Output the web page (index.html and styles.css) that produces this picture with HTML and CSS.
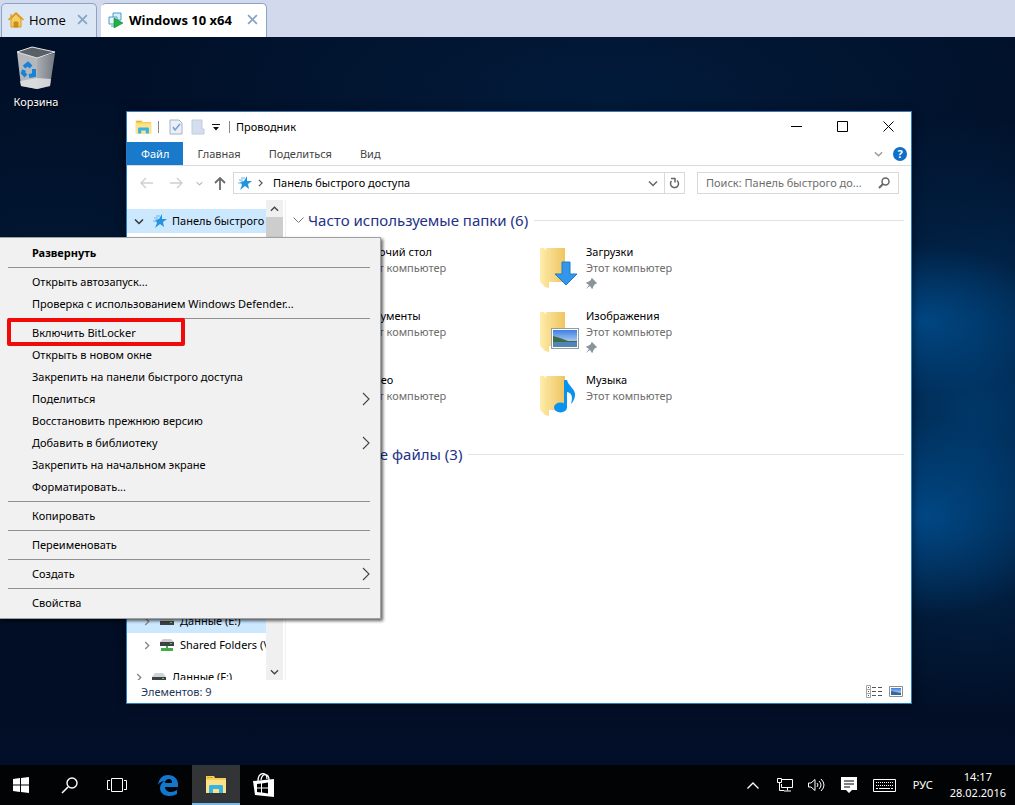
FILE: index.html
```html
<!DOCTYPE html>
<html lang="ru">
<head>
    <meta charset="UTF-8">
    <meta name="viewport" content="width=device-width, initial-scale=1.0">
    <title>Windows 10 x64</title>
    <link rel="stylesheet" href="styles.css">
</head>
<body>
    <svg class="defs" aria-hidden="true">
        <defs>
            <linearGradient id="folderBack" x1="0" x2="1"><stop offset="0" stop-color="#fbe29b"/><stop offset="1" stop-color="#eec560"/></linearGradient>
            <linearGradient id="folderFront" x1="0" x2="1"><stop offset="0" stop-color="#ffeeb0"/><stop offset="1" stop-color="#f7dc8a"/></linearGradient>
            <linearGradient id="sky" x1="0" x2="0" y1="0" y2="1"><stop offset="0" stop-color="#3f7fe0"/><stop offset="1" stop-color="#dcecf8"/></linearGradient>
            <linearGradient id="binSide" x1="0" x2="1"><stop offset="0" stop-color="#a9adb3"/><stop offset="1" stop-color="#747a82"/></linearGradient>
        </defs>
        <symbol id="folder" viewBox="0 0 26 42">
            <path d="M6 1h19v34H6z" fill="url(#folderBack)"/>
            <path d="M0 1h4l5 6v34l-4-1-5-5z" fill="url(#folderFront)"/>
        </symbol>
        <symbol id="explorer" viewBox="0 0 22 19">
            <path d="M1 1h8l1 2h11v15H1z" fill="#f5cf57"/>
            <path d="M2 2h6v1H2z" fill="#d9a52c"/>
            <path d="M1 5h20v13H1z" fill="#fde28a"/>
            <path d="M4 18v-7l1-1h12l1 1v7h-4v-4H8v4z" fill="#35b5e5"/>
        </symbol>
        <symbol id="star" viewBox="0 0 14 14">
            <path d="M9 0l0 5 5 0-4 3 1 5-4-3-5 4 2-5-2-3 4-1z" fill="#2494e0"/>
            <path d="M3 2h4M1 4h4M0 7h4" stroke="#62b7ef" fill="none"/>
        </symbol>
        <symbol id="pin" viewBox="0 0 11 11">
            <path d="M6 0l5 5-1 1-1 0-2 3v1l-1 1-2-3-4 3 3-4-3-2 1-1h1l3-2V1z" fill="#8a949b"/>
        </symbol>
        <symbol id="down" viewBox="0 0 10 6"><path d="M1 1l4 4 4-4" fill="none" stroke="currentColor" stroke-width="1.5"/></symbol>
        <symbol id="right" viewBox="0 0 6 10"><path d="M1 1l4 4-4 4" fill="none" stroke="currentColor" stroke-width="1.5"/></symbol>
        <symbol id="more" viewBox="0 0 8 14"><path d="M1 1l6 6-6 6" fill="none" stroke="#444" stroke-width="1.1"/></symbol>
        <symbol id="cross" viewBox="0 0 10 10"><path d="M1 1l8 8M9 1l-8 8" fill="none" stroke="currentColor" stroke-width="1.6"/></symbol>
        <symbol id="drive" viewBox="0 0 14 9">
            <path d="M3 0h8l3 4H0z" fill="#d0d3d6"/>
            <path d="M0 4h14v4H0z" fill="#3d4246"/>
            <path d="M10 5h2v1h-2z" fill="#51d651"/>
        </symbol>
        <symbol id="photo" viewBox="0 0 28 21">
            <path d="M0 0h28v21H0z" fill="#969ba0"/>
            <path d="M1 1h26v19H1z" fill="#fff"/>
            <path d="M2 2h24v17H2z" fill="url(#sky)"/>
            <path d="M2 8l7 2 8 3 9 0v2H2z" fill="#3c6b45"/>
            <path d="M2 14h24v5H2z" fill="#5384b5"/>
        </symbol>
    </svg>

    <nav class="vm-tabs">
        <div class="vm-tab">
            <svg width="16" height="16" viewBox="0 0 16 16"><path d="M3 7v8h10V7L8 2z" fill="#f6cf63" stroke="#d49a1c"/><path d="M0.500 8L8 1l7.500 7" fill="none" stroke="#dba126" stroke-width="1.600"/><path d="M3 2v3M6 10h4v5H6z" fill="#c98d1d" stroke="#c98d1d"/></svg>
            <a href="#">Home</a>
            <button class="vm-close" aria-label="Close Home"><svg width="11" height="11"><use href="#cross"/></svg></button>
        </div>
        <div class="vm-tab vm-tab-active">
            <svg width="16" height="16" viewBox="0 0 16 16"><path d="M5 1h8v7H5z" fill="#d9edf8" stroke="#4b9cc4"/><path d="M1 5h8v7H1zM3 14h5" fill="#e9f5fb" stroke="#4b9cc4"/><path d="M6 6l9 5-9 5z" fill="#1fb141" stroke="#0d8c2c" stroke-width=".6"/></svg>
            <a href="#">Windows 10 x64</a>
            <button class="vm-close" aria-label="Close Windows 10 x64"><svg width="11" height="11"><use href="#cross"/></svg></button>
        </div>
    </nav>

    <main class="desktop">
        <a class="shortcut" href="#">
            <svg width="40" height="44" viewBox="0 0 40 44">
                <path d="M1 6l20 6v31L5 40z" fill="#b4b8bd"/>
                <path d="M21 12l18-5-5 33-13 3z" fill="url(#binSide)"/>
                <path d="M1 6L16 1l23 5-18 6z" fill="#5b6067" stroke="#e7e9eb"/>
                <path d="M4 35l17-3 14 1-1 7-13 3-16-3z" fill="#e2e3e4" opacity=".8"/>
                <g fill="none" stroke="#1682d8" stroke-width="4"><path d="M8 21l4-3 3 3"/><path d="M18 23l0 6-5 1"/><path d="M10 30l-3-3 1-3"/></g>
            </svg>
            <span>Корзина</span>
        </a>

        <section class="window">
            <header class="titlebar">
                <svg width="17" height="16"><use href="#explorer"/></svg>
                <i class="rule"></i>
                <button class="quick" aria-label="Свойства"><svg width="14" height="16" viewBox="0 0 14 16"><path d="M1 1h9l3 3v11H1z" fill="#e9f0fa" stroke="#a5b2c6"/><path d="M4 8l2 3 5-6" fill="none" stroke="#7d9cc7" stroke-width="1.500"/></svg></button>
                <button class="quick" aria-label="Новая папка"><svg width="14" height="16" viewBox="0 0 14 16"><path d="M1 1h10v9h2v5H1z" fill="#d5deee" stroke="#c0cbdc"/></svg></button>
                <button class="quick quick-menu" aria-label="Настройка"><svg width="8" height="7" viewBox="0 0 8 7"><path d="M0 0h8v1H0zM1 3h6L4 6.500z" fill="#111"/></svg></button>
                <i class="rule"></i>
                <span class="window-title">Проводник</span>
                <div class="window-buttons">
                    <button aria-label="Свернуть"><svg width="11" height="11" viewBox="0 0 11 11"><path d="M0 5h11v1H0z"/></svg></button>
                    <button aria-label="Развернуть"><svg width="11" height="11" viewBox="0 0 11 11"><path d="M.5.5h10v10H.5z" fill="none" stroke="#000"/></svg></button>
                    <button aria-label="Закрыть"><svg width="11" height="11" viewBox="0 0 11 11"><path d="M.5.5l10 10M10.500.5l-10 10" stroke="#000"/></svg></button>
                </div>
            </header>

            <nav class="ribbon">
                <a class="ribbon-file" href="#">Файл</a>
                <a href="#">Главная</a>
                <a href="#">Поделиться</a>
                <a href="#">Вид</a>
                <div class="ribbon-end">
                    <button aria-label="Развернуть ленту"><svg width="9" height="6"><use href="#down"/></svg></button>
                    <button class="help" aria-label="Справка">?</button>
                </div>
            </nav>

            <div class="address-row">
                <div class="nav-buttons">
                    <button aria-label="Назад"><svg width="13" height="12" viewBox="0 0 13 12"><path d="M13 6H1M6 1L1 6l5 5" fill="none" stroke="#cfcfcf" stroke-width="1.400"/></svg></button>
                    <button aria-label="Вперед"><svg width="13" height="12" viewBox="0 0 13 12"><path d="M0 6h12M7 1l5 5-5 5" fill="none" stroke="#cfcfcf" stroke-width="1.400"/></svg></button>
                    <button class="nav-recent" aria-label="Последние расположения"><svg width="7" height="5"><use href="#down"/></svg></button>
                    <button class="nav-up" aria-label="Вверх"><svg width="12" height="13" viewBox="0 0 12 13"><path d="M6 13V1M1 6l5-5 5 5" fill="none" stroke="#6b6b6b" stroke-width="1.800"/></svg></button>
                </div>
                <div class="address">
                    <svg width="14" height="14"><use href="#star"/></svg>
                    <svg class="crumb" width="5" height="8"><use href="#right"/></svg>
                    <span>Панель быстрого доступа</span>
                    <button class="address-drop" aria-label="Предыдущие расположения"><svg width="10" height="7"><use href="#down"/></svg></button>
                    <button class="refresh" aria-label="Обновить"><svg width="11" height="12" viewBox="0 0 11 12"><path d="M2.500 4A4 4 0 1 0 8 3.500M2 1.500h4.500M6 1v4.500" fill="none" stroke="#666" stroke-width="1.500"/></svg></button>
                </div>
                <label class="search">
                    <input type="text" placeholder="Поиск: Панель быстрого до..." aria-label="Поиск">
                    <svg width="12" height="12" viewBox="0 0 12 12"><circle cx="7.500" cy="4.500" r="3.500" fill="none" stroke="#666" stroke-width="1.500"/><path d="M5 7l-4 4" stroke="#666" stroke-width="2"/></svg>
                </label>
            </div>

            <div class="panes">
                <aside class="tree">
                    <a class="tree-row tree-selected" href="#"><svg class="open" width="10" height="7"><use href="#down"/></svg><svg width="14" height="14"><use href="#star"/></svg><span>Панель быстрого</span></a>
                    <div class="tree-bottom">
                        <a class="tree-row tree-child tree-selected" href="#"><svg width="6" height="9"><use href="#right"/></svg><svg width="14" height="9"><use href="#drive"/></svg><span>Данные (E:)</span></a>
                        <a class="tree-row tree-child" href="#"><svg width="6" height="9"><use href="#right"/></svg><svg width="14" height="13" viewBox="0 0 14 13"><path d="M3 0h8l3 3H0z" fill="#c9cdd0"/><path d="M0 3h14v4H0z" fill="#3d4246"/><path d="M10 4h2v1h-2z" fill="#51d651"/><path d="M6 7h2v2h5v3H1V9h5z" fill="#3fae48"/></svg><span>Shared Folders (\</span></a>
                        <a class="tree-row tree-last" href="#"><svg width="6" height="9"><use href="#right"/></svg><svg width="14" height="9"><use href="#drive"/></svg><span>Данные (F:)</span></a>
                    </div>
                </aside>
                <div class="scrollbar">
                    <button aria-label="Вверх"><svg class="flip" width="9" height="6"><use href="#down"/></svg></button>
                    <div class="thumb"></div>
                    <button aria-label="Вниз"><svg width="9" height="6"><use href="#down"/></svg></button>
                </div>
                <div class="files">
                    <h2><svg width="11" height="7" viewBox="0 0 11 7"><path d="M.5.5l5 5 5-5" fill="none" stroke="#777"/></svg>Часто используемые папки (6)</h2>
                    <div class="tiles">
                        <a class="tile" href="#"><span class="tile-icon"><svg width="26" height="42"><use href="#folder"/></svg></span><span class="tile-text"><b>Рабочий стол</b><small>Этот компьютер</small></span></a>
                        <a class="tile" href="#"><span class="tile-icon"><svg width="26" height="42"><use href="#folder"/></svg><svg class="badge badge-arrow" width="24" height="25" viewBox="0 0 24 25"><path d="M8 1h8v12h7L12 24 1 13h7z" fill="#3396e8" stroke="#1f7bc9"/></svg></span><span class="tile-text"><b>Загрузки</b><small>Этот компьютер</small><svg width="11" height="11"><use href="#pin"/></svg></span></a>
                        <a class="tile" href="#"><span class="tile-icon"><svg width="26" height="42"><use href="#folder"/></svg></span><span class="tile-text"><b>Документы</b><small>Этот компьютер</small></span></a>
                        <a class="tile" href="#"><span class="tile-icon"><svg width="26" height="42"><use href="#folder"/></svg><svg class="badge badge-photo" width="28" height="21"><use href="#photo"/></svg></span><span class="tile-text"><b>Изображения</b><small>Этот компьютер</small><svg width="11" height="11"><use href="#pin"/></svg></span></a>
                        <a class="tile" href="#"><span class="tile-icon"><svg width="26" height="42"><use href="#folder"/></svg></span><span class="tile-text"><b>Видео</b><small>Этот компьютер</small></span></a>
                        <a class="tile" href="#"><span class="tile-icon"><svg width="26" height="42"><use href="#folder"/></svg><svg class="badge badge-note" width="22" height="33" viewBox="0 0 22 33"><ellipse cx="6.500" cy="27.500" rx="6.500" ry="5" fill="#0a93ee"/><path d="M10 0h3c1 6 9 9 8 16-1 4-2 6-4 8 2-7 1-11-4-12v16h-3z" fill="#0a93ee"/></svg></span><span class="tile-text"><b>Музыка</b><small>Этот компьютер</small></span></a>
                    </div>
                    <h2><svg width="11" height="7" viewBox="0 0 11 7"><path d="M.5.5l5 5 5-5" fill="none" stroke="#777"/></svg>Последние файлы (3)</h2>
                </div>
            </div>

            <footer class="status">
                <span>Элементов: 9</span>
                <div class="views">
                    <button aria-label="Таблица"><svg width="16" height="13" viewBox="0 0 16 13"><path d="M.5.5h4v12h-4zM.5 4.500h4M.5 8.500h4" fill="none" stroke="#a3a3a3"/><path d="M2 2h1v1H2zM2 6h1v1H2zM2 10h1v1H2zM6 2h4v1H6zM12 2h4v1h-4zM6 6h4v1H6zM12 6h4v1h-4zM6 10h4v1H6zM12 10h4v1h-4z" fill="#555"/></svg></button>
                    <button aria-label="Крупные значки"><svg width="14" height="11" viewBox="0 0 14 11"><path d="M.5.5h13v10H.5z" fill="#fff" stroke="#8f8f8f"/><path d="M2 2h10v7H2z" fill="url(#sky)"/><path d="M2 5l5 1 5 1v2H2z" fill="#356a92"/></svg></button>
                </div>
            </footer>
        </section>

        <div class="menu" role="menu">
            <button class="menu-default" role="menuitem">Развернуть</button>
            <hr>
            <button role="menuitem">Открыть автозапуск...</button>
            <button role="menuitem">Проверка с использованием Windows Defender...</button>
            <hr>
            <button class="menu-marked" role="menuitem">Включить BitLocker</button>
            <button role="menuitem">Открыть в новом окне</button>
            <button role="menuitem">Закрепить на панели быстрого доступа</button>
            <button role="menuitem">Поделиться<svg width="8" height="14"><use href="#more"/></svg></button>
            <button role="menuitem">Восстановить прежнюю версию</button>
            <button role="menuitem">Добавить в библиотеку<svg width="8" height="14"><use href="#more"/></svg></button>
            <button role="menuitem">Закрепить на начальном экране</button>
            <button role="menuitem">Форматировать...</button>
            <hr>
            <button role="menuitem">Копировать</button>
            <hr>
            <button role="menuitem">Переименовать</button>
            <hr>
            <button role="menuitem">Создать<svg width="8" height="14"><use href="#more"/></svg></button>
            <hr>
            <button role="menuitem">Свойства</button>
        </div>
    </main>

    <footer class="taskbar">
        <div class="system">
            <button class="start" aria-label="Пуск"><svg width="16" height="16" viewBox="0 0 16 16"><path d="M0 2l7-1v6.500H0zM8 1l8-1v7.500H8zM0 8.500h7V15l-7-1zM8 8.500h8V16l-8-1z" fill="#fff"/></svg></button>
            <button aria-label="Поиск"><svg width="17" height="17" viewBox="0 0 17 17"><circle cx="11" cy="6" r="5" fill="none" stroke="#fff" stroke-width="1.400"/><path d="M7 10l-6 6" stroke="#fff" stroke-width="1.600"/></svg></button>
            <button aria-label="Представление задач"><svg width="20" height="14" viewBox="0 0 20 14"><path d="M4.500.5h11v13h-11zM3 2.500H.5v9H3M17 2.500h2.500v9H17" fill="none" stroke="#fff"/></svg></button>
        </div>
        <button aria-label="Edge"><svg width="20" height="21" viewBox="0 0 20 21"><path d="M0 10C1 3 5 0 10 0c6 0 10 4 10 9v3H7c0 3 3 5 6 5 2 0 4-1 6-2v4c-2 1-5 2-8 2-6 0-9-4-9-8 0-3 2-6 5-7C4 6 2 7 0 10zm7-2h7c0-3-1-4-3-4S7 5 7 8z" fill="#1178d0"/></svg></button>
        <button class="task-active" aria-label="Проводник"><svg width="22" height="19"><use href="#explorer"/></svg></button>
        <button aria-label="Магазин"><svg width="22" height="24" viewBox="0 0 22 24"><path d="M5 8c0-9 9-10 9-2M8 7c1-8 8-6 8 0" fill="none" stroke="#fff" stroke-width="1.300"/><path d="M0 8l21-2v18L2 22z" fill="#fff"/><path d="M4 11l4-.5v4H4zM9 10.400l6-.9v5H9zM4 15.500h4v4l-4-.5zM9 15.500h6v5l-6-.9z" fill="#000"/></svg></button>
        <div class="tray">
            <button aria-label="Скрытые значки"><svg width="12" height="7" viewBox="0 0 12 7"><path d="M.5 6.500L6 1l5.500 5.500" fill="none" stroke="#fff" stroke-width="1.300"/></svg></button>
            <button aria-label="Сеть"><svg width="16" height="14" viewBox="0 0 16 14"><path d="M5 1.500h10.500v8H4.500V6M10.500 9.500v3M7 13h7M.5.5h4v4h-4zM2.500 5v7.500H7" fill="none" stroke="#fff"/></svg></button>
            <button aria-label="Громкость"><svg width="17" height="14" viewBox="0 0 17 14"><path d="M.5 5v4h2.500l4 3.500v-11L3 5zM9 5q2 2 0 4M11 3q4 4 0 8M13 1q6 6 0 12" fill="none" stroke="#fff"/></svg></button>
            <button aria-label="Уведомления"><svg width="16" height="16" viewBox="0 0 16 16"><path d="M0 0h16v13h-5l-3 3-3-3H0z" fill="#fff"/><path d="M3 4h10M3 7h10M3 10h6" stroke="#000"/></svg></button>
            <button class="keyboard" aria-label="Клавиатура"><svg width="23" height="13" viewBox="0 0 23 13"><path d="M.5.5h22v12H.5z" fill="none" stroke="#fff"/><path d="M3 3.500h18M3 6.500h18" stroke="#fff" stroke-dasharray="1 1"/><path d="M3 9.500h2M6 9.500h11M18 9.500h2" stroke="#fff"/></svg></button>
            <button class="language">РУС</button>
            <time class="clock" datetime="2016-02-28T14:17">14:17<br>28.02.2016</time>
        </div>
    </footer>
</body>
</html>
```
FILE: styles.css
```css
* {
    box-sizing: border-box;
}

body {
    margin: 0;
    height: 100vh;
    display: flex;
    flex-direction: column;
    overflow: hidden;
    font-family: "Noto Sans", "Open Sans", sans-serif;
    font-size: 11px;
    line-height: 16px;
    color: #000;
}

a {
    color: inherit;
    text-decoration: none;
}

button {
    display: flex;
    align-items: center;
    justify-content: center;
    margin: 0;
    padding: 0;
    border: none;
    background: none;
    font: inherit;
    color: inherit;
}

svg {
    display: block;
    flex: none;
}

.defs {
    position: absolute;
    width: 0;
    height: 0;
}

/* machine tabs */
.vm-tabs {
    display: flex;
    gap: 4px;
    height: 37px;
    padding: 3px 1px 0;
    background: #d2d9ec;
    font-family: "Open Sans", sans-serif;
    font-size: 13px;
}

.vm-tab {
    display: flex;
    align-items: center;
    gap: 5px;
    width: 96px;
    padding: 0 8px 2px 6px;
    border: 1px solid #8ba3c4;
    border-bottom: none;
    border-radius: 5px 5px 0 0;
    background: #dbe7f5;
}

.vm-tab-active {
    width: 166px;
    border-left-color: #fff;
    background: #fff;
    font-weight: bold;
}

.vm-close {
    margin-left: auto;
    color: #86a5c4;
}

/* desktop */
.desktop {
    position: relative;
    flex: 1;
    min-height: 0;
    background:
        radial-gradient(ellipse 130px 75px at 91% 39%, rgba(0, 82, 150, 0.7), transparent),
        radial-gradient(ellipse 140px 100px at 91% 66%, rgba(0, 82, 150, 0.75), transparent),
        radial-gradient(ellipse 260px 300px at 96% 52%, rgba(0, 66, 122, 0.8), transparent),
        radial-gradient(ellipse 480px 180px at 60% 8%, rgba(2, 38, 76, 0.5), transparent),
        radial-gradient(ellipse 260px 200px at 5% 35%, rgba(2, 38, 76, 0.4), transparent),
        linear-gradient(#011029, #010d22 70%, #020f28);
}

.shortcut {
    display: flex;
    flex-direction: column;
    align-items: center;
    gap: 4px;
    width: 72px;
    padding-top: 9px;
    color: #fff;
    text-shadow: 1px 1px 2px #000;
}

/* explorer window */
.window {
    position: absolute;
    top: 74px;
    right: 103px;
    bottom: 61px;
    left: 126px;
    display: flex;
    flex-direction: column;
    border: 1px solid #2b7cc0;
    background: #fff;
    box-shadow: 0 0 8px rgba(0, 0, 0, 0.5);
}

.titlebar {
    display: flex;
    align-items: center;
    height: 30px;
    padding-left: 8px;
}

.rule {
    width: 1px;
    height: 12px;
    margin: 0 6px;
    background: #888;
}

.quick {
    width: 22px;
}

.quick-menu {
    width: 14px;
}

.window-buttons {
    display: flex;
    align-self: stretch;
    margin-left: auto;
    padding-bottom: 2px;
}

.window-buttons button {
    width: 46px;
}

.ribbon {
    display: flex;
    height: 24px;
    border-bottom: 1px solid #dadbdc;
    line-height: 24px;
    color: #444;
}

.ribbon a {
    padding: 0 14px;
}

.ribbon .ribbon-file {
    background: #1979ca;
    color: #fff;
}

.ribbon-end {
    display: flex;
    align-items: center;
    gap: 10px;
    margin-left: auto;
    padding-right: 4px;
    color: #999;
}

.help {
    width: 14px;
    height: 14px;
    border-radius: 50%;
    background: #0f6fc9;
    color: #fff;
    font-weight: bold;
}

.address-row {
    display: flex;
    align-items: center;
    height: 34px;
    padding-right: 12px;
}

.nav-buttons {
    display: flex;
    width: 106px;
    padding-left: 4px;
}

.nav-buttons button {
    width: 30px;
}

.nav-buttons .nav-recent {
    width: 16px;
    color: #bbb;
}

.nav-buttons .nav-up {
    width: 26px;
}

.address {
    display: flex;
    flex: 1;
    align-items: center;
    gap: 6px;
    height: 22px;
    margin-right: 12px;
    border: 1px solid #d9d9d9;
    padding-left: 4px;
}

.crumb {
    margin-right: 4px;
    color: #555;
}

.address-drop {
    margin-left: auto;
    color: #666;
}

.refresh {
    align-self: stretch;
    width: 20px;
    border-left: 1px solid #d9d9d9;
}

.search {
    display: flex;
    align-items: center;
    width: 202px;
    height: 22px;
    padding: 0 8px;
    border: 1px solid #d9d9d9;
}

.search input {
    flex: 1;
    min-width: 0;
    padding: 0;
    border: none;
    outline: none;
    background: none;
    font: inherit;
}

.search input::placeholder {
    color: #6d6d6d;
}

.panes {
    display: flex;
    flex: 1;
    min-height: 0;
}

.tree {
    display: flex;
    flex-direction: column;
    width: 139px;
    padding-top: 9px;
    overflow: hidden;
}

.tree-row {
    display: flex;
    flex: none;
    align-items: center;
    gap: 5px;
    height: 24px;
    padding-left: 9px;
    color: #888;
    white-space: nowrap;
}

.tree-row span {
    color: #000;
}

.tree-row .open {
    margin: 0 1px 0 -2px;
    color: #333;
}

.tree-selected {
    background: #cce8ff;
}

.tree-bottom {
    margin-top: auto;
}

.tree-child {
    padding-left: 17px;
}

.tree-row svg + svg {
    margin-left: 3px;
}

.tree-bottom .tree-row {
    gap: 6px;
}

.tree-bottom svg + svg {
    margin-left: 4px;
}

.tree-bottom .tree-last {
    height: 15px;
    margin-top: 8px;
    align-items: flex-start;
    overflow: hidden;
    padding-top: 4px;
}

.tree-last svg {
    margin-top: 4px;
}

.scrollbar {
    display: flex;
    flex-direction: column;
    width: 17px;
    background: #f0f0f0;
    color: #444;
}

.scrollbar button {
    height: 17px;
}

.flip {
    transform: rotate(180deg);
}

.thumb {
    height: 200px;
    margin-bottom: auto;
    background: #cdcdcd;
}

.files {
    flex: 1;
    margin-left: 2px;
    padding: 9px 7px 0 7px;
    border-left: 1px solid #f0f0f0;
}

.files h2 {
    display: flex;
    align-items: center;
    gap: 4px;
    margin: 0 0 8px;
    font-size: 15px;
    font-weight: normal;
    line-height: 22px;
    color: #1e3287;
}

.files h2::after {
    content: "";
    flex: 1;
    height: 1px;
    margin-left: 2px;
    background: #e2e2e2;
}

.tiles {
    display: grid;
    grid-template-columns: 226px 226px;
    grid-auto-rows: 64px;
    padding: 5px 0 7px 21px;
}

.tile {
    display: flex;
}

.tile-icon {
    position: relative;
    width: 46px;
    padding-top: 3px;
}

.badge {
    position: absolute;
}

.badge-arrow {
    top: 17px;
    left: 14px;
}

.badge-photo {
    top: 20px;
    left: 11px;
}

.badge-note {
    top: 8px;
    left: 14px;
}

.tile-text b,
.tile-text small {
    display: block;
    font-size: 11px;
    font-weight: normal;
}

.tile-text small {
    color: #6d6d6d;
}

.tile-text svg {
    margin-top: 2px;
}

.status {
    display: flex;
    align-items: center;
    justify-content: space-between;
    height: 23px;
    padding: 0 8px 0 14px;
    color: #1e395b;
}

.views {
    display: flex;
    gap: 7px;
}

/* context menu */
.menu {
    position: absolute;
    top: 200px;
    left: 0;
    width: 381px;
    padding: 4px 0;
    border: 1px solid #a0a0a0;
    border-left: none;
    background: #f1f1f1;
    box-shadow: 2px 2px 3px rgba(0, 0, 0, 0.6);
}

.menu button {
    position: relative;
    justify-content: space-between;
    width: 100%;
    height: 22px;
    padding: 0 10px 0 32px;
}

.menu hr {
    height: 1px;
    margin: 3px 10px 3px 8px;
    border: none;
    background: #919191;
}

.menu .menu-default {
    font-weight: bold;
}

.menu-marked::after {
    content: "";
    position: absolute;
    top: -4px;
    left: 7px;
    width: 170px;
    height: 20px;
    border: 4px solid #f00a0a;
    border-radius: 2px;
}

/* taskbar */
.taskbar {
    display: flex;
    height: 40px;
    background: #020305;
    color: #fff;
}

.taskbar button {
    width: 48px;
    height: 40px;
}

.system {
    display: flex;
    padding-right: 3px;
}

.taskbar .start {
    width: 45px;
    padding-right: 3px;
}

.taskbar .task-active {
    border-bottom: 2px solid #76b9ed;
    background: #333436;
}

.tray {
    display: flex;
    align-items: center;
    margin-left: auto;
    padding-right: 9px;
}

.tray button {
    width: 32px;
}

.tray .keyboard {
    width: 39px;
}

.tray .language {
    width: 38px;
}

.clock {
    margin-left: 8px;
    text-align: center;
}
```
